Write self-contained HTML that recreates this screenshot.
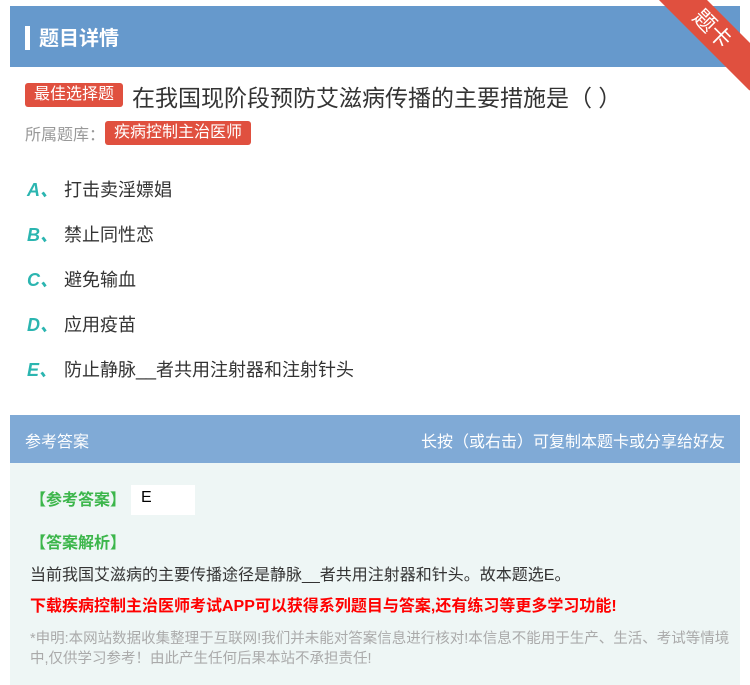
<!DOCTYPE html>
<html><head><meta charset="utf-8"><style>
*{margin:0;padding:0;box-sizing:border-box}
body{width:750px;height:685px;background:#fff;font-family:"Liberation Sans","Noto Sans CJK SC",sans-serif;position:relative;overflow:hidden}
.hd{position:absolute;left:10px;top:6px;width:730px;height:61px;background:#6699cc}
.hd .bar{position:absolute;left:15px;top:20px;width:5px;height:24px;background:#fff}
.hd .t{position:absolute;left:29px;top:16px;color:#fff;font-size:20px;font-weight:bold}
.rib{position:absolute;right:-32px;top:12px;width:140px;height:34px;background:#e0503f;transform:rotate(45deg);color:#fff;font-size:22px;text-align:center;line-height:34px;transform-origin:center}
.tag{position:absolute;background:#e0503f;color:#fff;border-radius:3px;font-size:16px;line-height:24px;padding:0 9px}
.q{position:absolute;left:132px;top:79px;font-size:23px;color:#333}
.lib{position:absolute;left:25px;top:121px;font-size:16px;color:#999}
.op{position:absolute;left:27px;font-size:18px;color:#333}
.op b{color:#2bb5b0;font-style:italic;font-size:18px;display:inline-block;width:37px}
.ah{position:absolute;left:10px;top:415px;width:730px;height:48px;background:#80aad6;color:#fff;font-size:16px}
.ab{position:absolute;left:10px;top:463px;width:730px;height:222px;background:#eef6f5}
.g{color:#3cb64b;font-size:16px;font-weight:bold;position:absolute}
</style></head><body>
<div class="hd"><div class="bar"></div><div class="t">题目详情</div></div>
<div class="rib">题卡</div>
<div class="tag" style="left:25px;top:83px">最佳选择题</div>
<div class="q">在我国现阶段预防艾滋病传播的主要措施是（ ）</div>
<div class="lib">所属题库：</div>
<div class="tag" style="left:105px;top:121px">疾病控制主治医师</div>
<div class="op" style="top:176px"><b>A、</b>打击卖淫嫖娼</div>
<div class="op" style="top:221px"><b>B、</b>禁止同性恋</div>
<div class="op" style="top:266px"><b>C、</b>避免输血</div>
<div class="op" style="top:311px"><b>D、</b>应用疫苗</div>
<div class="op" style="top:356px"><b>E、</b>防止静脉__者共用注射器和注射针头</div>
<div class="ah"><span style="position:absolute;left:15px;top:13px">参考答案</span><span style="position:absolute;right:15px;top:13px">长按（或右击）可复制本题卡或分享给好友</span></div>
<div class="ab">
<div class="g" style="left:20px;top:23px">【参考答案】</div>
<div style="position:absolute;left:121px;top:22px;width:64px;height:30px;background:#fff;font-size:16px;padding:4px 10px">E</div>
<div class="g" style="left:20px;top:66px">【答案解析】</div>
<div style="position:absolute;left:20px;top:98px;font-size:16px;color:#333">当前我国艾滋病的主要传播途径是静脉__者共用注射器和针头。故本题选E。</div>
<div style="position:absolute;left:20px;top:129px;font-size:16px;color:#f00;font-weight:bold">下载疾病控制主治医师考试APP可以获得系列题目与答案,还有练习等更多学习功能!</div>
<div style="position:absolute;left:20px;top:166px;width:700px;font-size:14.5px;color:#aaa;line-height:20px">*申明:本网站数据收集整理于互联网!我们并未能对答案信息进行核对!本信息不能用于生产、生活、考试等情境中,仅供学习参考！由此产生任何后果本站不承担责任!</div>
</div>
</body></html>
